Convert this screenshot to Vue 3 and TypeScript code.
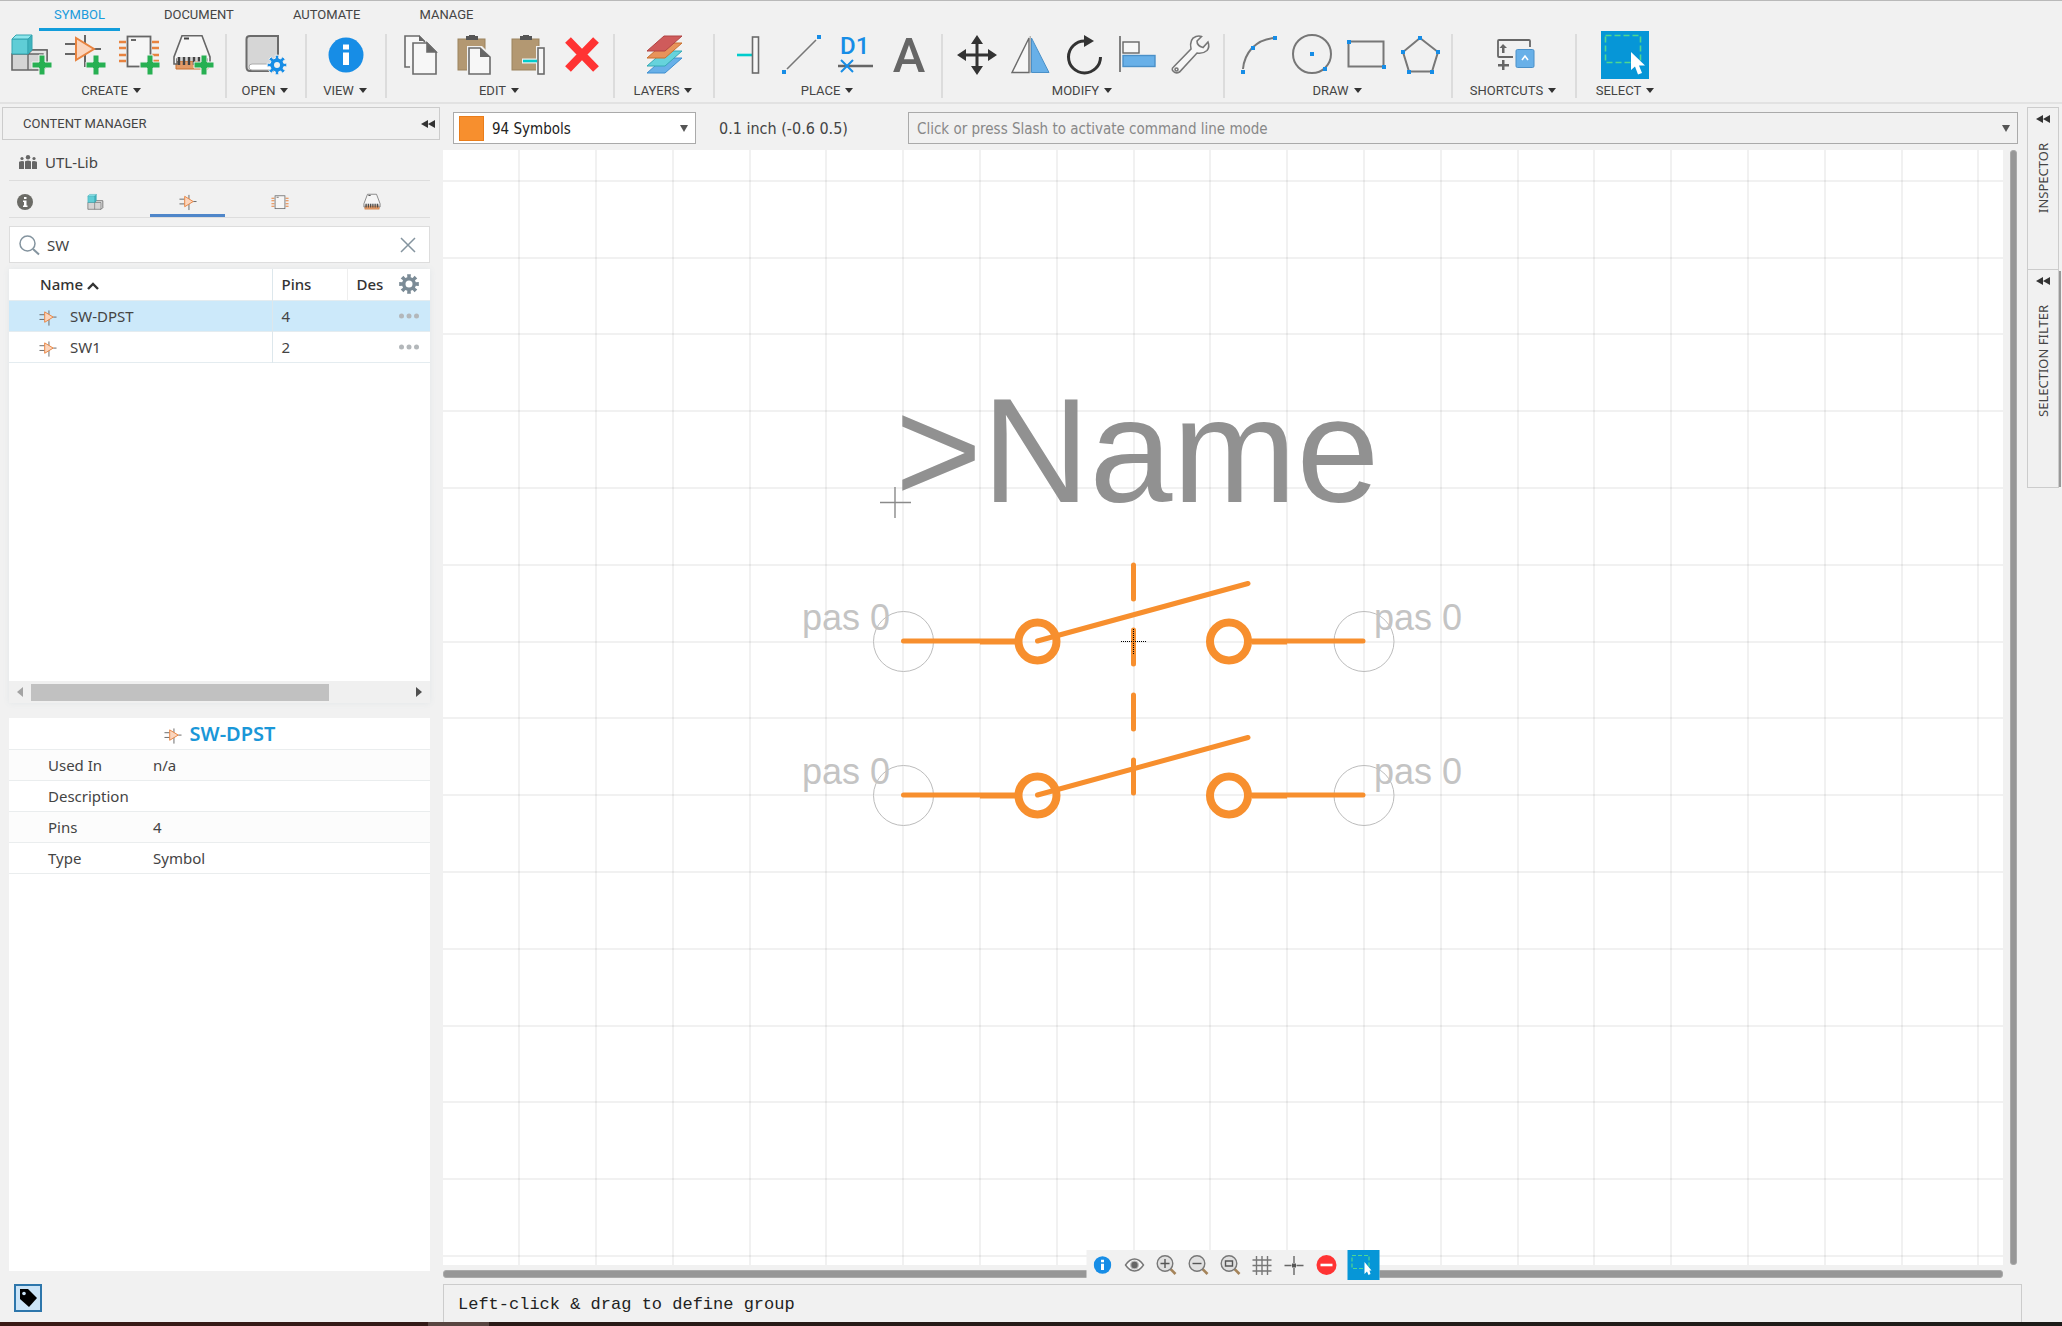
<script setup lang="ts">
import { ref } from 'vue'

const GRID = 76.8
const ORIGIN_X = 690.6
const ORIGIN_Y = 491.5

// Grid lines are placed around the symbol origin and extend past the visible sheet.
const columns = Array.from({ length: 50 }, (_, i) => Math.round(ORIGIN_X + (i - 9) * GRID))
const rows = Array.from({ length: 30 }, (_, i) => Math.round(ORIGIN_Y + (i - 6) * GRID))

function gear(cx: number, cy: number, outer: number, inner: number): string {
  const pts: string[] = []
  for (let i = 0; i < 8; i++) {
    const a = (i * Math.PI) / 4
    const steps: [number, number][] = [[-0.24, inner], [-0.19, outer], [0.19, outer], [0.24, inner]]
    for (const [d, r] of steps) {
      pts.push(`${(cx + r * Math.sin(a + d)).toFixed(2)} ${(cy - r * Math.cos(a + d)).toFixed(2)}`)
    }
  }
  return `M${pts.join('L')}Z`
}
const openGear = gear(32, 30, 10, 7)
const listGear = gear(10, 10, 10, 7)

const menus = ['SYMBOL', 'DOCUMENT', 'AUTOMATE', 'MANAGE']
const activeMenu = ref('SYMBOL')
const search = ref('SW')
const layer = ref('94 Symbols')

const symbols = [
  { name: 'SW-DPST', pins: 4 },
  { name: 'SW1', pins: 2 },
]
const selected = ref('SW-DPST')

const details = [
  { label: 'Used In', value: 'n/a' },
  { label: 'Description', value: '' },
  { label: 'Pins', value: '4' },
  { label: 'Type', value: 'Symbol' },
]

const layerSheets = [
  { y: 22, fill: '#68b0e8', edge: '#3f8fd0' },
  { y: 15, fill: '#66d3dc', edge: '#35aab5' },
  { y: 7, fill: '#e8935a', edge: '#c9712f' },
  { y: 0, fill: '#cf5b5b', edge: '#b04444' },
]
const poles = [0, 154]
</script>

<template>
  <div class="app">
    <svg class="defs" aria-hidden="true">
      <symbol id="opamp" viewBox="0 0 40 40" overflow="visible">
        <path d="M1 9H12M1 19H12M21 0V32M30 14H37" stroke="#666" stroke-width="2" fill="none" />
        <path d="M12 3V25L30 14Z" fill="#fbd5bd" stroke="#e8833f" stroke-width="2" />
      </symbol>
      <symbol id="cubes" viewBox="0 0 40 40" overflow="visible">
        <path d="M18 19L22 15H37V31L33 35H2V19Z" fill="#d4d4d4" stroke="#666" stroke-width="1.6" />
        <path d="M18 19V35M22 15H37V31L33 35V19H18Z" fill="#e4e4e4" stroke="#666" stroke-width="1.4" />
        <path d="M2 4H18V19H2Z" fill="#5fcdd6" stroke="#35a5b0" />
        <path d="M2 4L6 0H22L18 4Z" fill="#8ee6ec" stroke="#35a5b0" />
        <path d="M18 4L22 0V15L18 19Z" fill="#3fb3bd" stroke="#35a5b0" />
      </symbol>
      <symbol id="chip" viewBox="0 0 40 40" overflow="visible">
        <path d="M1 7H8M1 13H8M1 20H8M1 26H8M34 7H41M34 13H41M34 20H41M34 26H41" stroke="#e8833f" stroke-width="2.4" />
        <rect x="9.5" y="1.5" width="23" height="30" fill="#f6f6f6" stroke="#666" stroke-width="1.8" />
        <path d="M13 5H18" stroke="#444" stroke-width="1.6" />
      </symbol>
      <symbol id="package" viewBox="0 0 40 40" overflow="visible">
        <path d="M4 26H36V34H4Z" fill="#e39a66" stroke="#c9712f" />
        <path d="M10 .8H30L38 22V29H35V24H5V29H2V22Z" fill="#f6f6f6" stroke="#666" stroke-width="1.6" />
        <path d="M5 22H35V26H5Z" fill="#d2d2d2" />
        <path d="M7 22V30M12 22V30M17 22V30M22 22V30M27 22V30M32 22V30" stroke="#444" stroke-width="2.4" />
        <path d="M12 3.5H17" stroke="#444" stroke-width="2" />
      </symbol>
      <symbol id="plus" viewBox="0 0 40 40" overflow="visible">
        <path d="M29 20H35V27H42V33H35V40H29V33H22V27H29Z" fill="#27b052" stroke="#f1f1f1" stroke-width="1" />
      </symbol>
      <symbol id="info" viewBox="0 0 36 36">
        <circle cx="18" cy="18" r="17.5" fill="#178de6" />
        <path d="M15 7.5H21V12.5H15ZM15 15.5H21V28H15Z" fill="#fff" />
      </symbol>
      <symbol id="marquee" viewBox="0 0 48 48">
        <rect x="4.5" y="4.5" width="35" height="27" fill="none" stroke="#4fd890" stroke-width="1.6" stroke-dasharray="6 3" />
        <path d="M30 21V39L34 35.5L37 43.5L41 42L38 34.5H44Z" fill="#fff" />
      </symbol>
    </svg>

    <header class="top">
      <nav class="menus">
        <button v-for="m in menus" :key="m" class="menu" :class="{ active: m === activeMenu }" @click="activeMenu = m">{{ m }}</button>
      </nav>
      <div class="toolbar">
        <section class="group first">
          <div class="icons">
            <button class="tool" aria-label="New component"><svg><use href="#cubes" /><use href="#plus" /></svg></button>
            <button class="tool" aria-label="New symbol"><svg><use href="#opamp" /><use href="#plus" /></svg></button>
            <button class="tool" aria-label="New footprint"><svg><use href="#chip" /><use href="#plus" /></svg></button>
            <button class="tool" aria-label="New package"><svg><use href="#package" /><use href="#plus" /></svg></button>
          </div>
          <button class="caption">CREATE</button>
        </section>
        <section class="group single">
          <div class="icons">
            <button class="tool" aria-label="Open library">
              <svg>
                <path d="M5 1H33V36H5Q1.5 36 1.5 32V4Q1.5 1 5 1Z" fill="#d6d6d6" stroke="#6b6b6b" stroke-width="2" />
                <path d="M32 29H7Q4 29 4 32T7 35H32Z" fill="#fff" stroke="#aaa" />
                <path :d="openGear" fill="#178de6" stroke="#f1f1f1" stroke-width="1" /><circle cx="32" cy="30" r="3" fill="#f1f1f1" />
              </svg>
            </button>
          </div>
          <button class="caption">OPEN</button>
        </section>
        <section class="group single">
          <div class="icons">
            <button class="tool" aria-label="Information"><svg><use href="#info" x="3" y="2" width="36" height="36" /></svg></button>
          </div>
          <button class="caption">VIEW</button>
        </section>
        <section class="group">
          <div class="icons">
            <button class="tool" aria-label="Copy">
              <svg fill="#f7f7f7" stroke="#6b6b6b" stroke-width="1.6">
                <path d="M12 32H7V1H21L27 7" /><path d="M21 0V6H27Z" fill="#666" stroke="none" />
                <path d="M15 8H29L38 17V39H15Z" /><path d="M29 8V17H38Z" fill="#666" />
              </svg>
            </button>
            <button class="tool" aria-label="Paste">
              <svg>
                <rect x="6" y="4" width="27" height="31" fill="#b39872" stroke="#9b835f" />
                <path d="M14 1H17V0H23V1H26V5H14Z" fill="#555" />
                <path d="M15 11H30L40 21V41H15Z" fill="#f1f1f1" />
                <path d="M17 13H28L38 22V39H17Z" fill="#f7f7f7" stroke="#6b6b6b" stroke-width="1.6" /><path d="M28 13V22H38Z" fill="#666" />
              </svg>
            </button>
            <button class="tool" aria-label="Paste pin">
              <svg>
                <rect x="6" y="4" width="27" height="31" fill="#b39872" stroke="#9b835f" />
                <path d="M14 1H17V0H23V1H26V5H14Z" fill="#555" />
                <path d="M30 11H40V41H30Z" fill="#f1f1f1" /><path d="M16 23.500H31V28.500H16Z" fill="#f1f1f1" />
                <path d="M17 26H31" stroke="#0cc" stroke-width="2.6" /><rect x="32" y="13" width="6" height="26" fill="#f7f7f7" stroke="#6b6b6b" stroke-width="1.6" />
              </svg>
            </button>
            <button class="tool" aria-label="Delete"><svg><path d="M8 5L36 34M36 5L8 34" stroke="#f33" stroke-width="8" /></svg></button>
          </div>
          <button class="caption">EDIT</button>
        </section>
        <section class="group layers">
          <div class="icons">
            <button class="tool" aria-label="Layers">
              <svg><path v-for="s in layerSheets" :key="s.y" d="M21 1H39L22 16H4Z" :transform="`translate(0 ${s.y})`" :fill="s.fill" :stroke="s.edge" /></svg>
            </button>
          </div>
          <button class="caption">LAYERS</button>
        </section>
        <section class="group">
          <div class="icons">
            <button class="tool" aria-label="Pin"><svg><path d="M11 20H26" stroke="#0cc" stroke-width="2.6" /><rect x="26.5" y="2" width="6" height="36" fill="#f7f7f7" stroke="#6b6b6b" stroke-width="1.6" /></svg></button>
            <button class="tool" aria-label="Line"><svg><path d="M7 34L36 5" stroke="#777" stroke-width="1.6" /><path d="M2 35h4v4h-4zM37 0h4v4h-4z" fill="#178de6" /></svg></button>
            <button class="tool" aria-label="Name"><svg><text x="6" y="19" class="d1">D1</text><path d="M4 31H39" stroke="#666" stroke-width="2.6" /><path d="M7 25L19 37M19 25L7 37" stroke="#178de6" stroke-width="2" /></svg></button>
            <button class="tool" aria-label="Text"><svg><text x="21" y="37" text-anchor="middle" class="big-a">A</text></svg></button>
          </div>
          <button class="caption">PLACE</button>
        </section>
        <section class="group">
          <div class="icons">
            <button class="tool" aria-label="Move">
              <svg><path d="M10 20H36M23 7V33" stroke="#333" stroke-width="3" /><path d="M23 0L29 9H17ZM23 40L29 31H17ZM3 20L12 14V26ZM43 20L34 14V26Z" fill="#333" /></svg>
            </button>
            <button class="tool" aria-label="Mirror">
              <svg><path d="M4 37.5L21 3V37.5Z" fill="#f7f7f7" stroke="#6b6b6b" stroke-width="1.4" /><path d="M22.2 1V38" stroke="#999" /><path d="M23.5 3L41 37.5H23.5Z" fill="#68b0e8" stroke="#4a90c8" /></svg>
            </button>
            <button class="tool" aria-label="Rotate"><svg><path d="M38.5 22A16 16 0 1 1 22.5 6" fill="none" stroke="#333" stroke-width="3" /><path d="M22 0V12L32 6Z" fill="#333" /></svg></button>
            <button class="tool" aria-label="Align">
              <svg><path d="M4 1V37" stroke="#666" stroke-width="1.6" /><rect x="7" y="7" width="16" height="11" fill="#f7f7f7" stroke="#666" stroke-width="1.4" /><rect x="7" y="20.5" width="32" height="11" fill="#68b0e8" stroke="#4a90c8" stroke-width="1.4" /></svg>
            </button>
            <button class="tool" aria-label="Change">
              <svg fill="#f7f7f7" stroke="#777" stroke-width="1.6">
                <path d="M3.5 32L21 14Q19 4 26 1.5Q29 .5 31.5 1.5L27 6Q27 11 33 12.5L38 7Q40 12 37 15.5Q33 19 27 18L9.5 37Q6 39 3.5 36.5T3.5 32Z" />
                <circle cx="6.5" cy="34.5" r="1.5" />
              </svg>
            </button>
          </div>
          <button class="caption">MODIFY</button>
        </section>
        <section class="group">
          <div class="icons">
            <button class="tool" aria-label="Arc"><svg><path d="M7 34Q8 22 16 13Q25 4 38 3" class="thin" /><path d="M5 35h4v4h-4zM15 11h4v4h-4zM37 1h4v4h-4z" class="dots" /></svg></button>
            <button class="tool" aria-label="Circle"><svg><circle cx="22" cy="19" r="19" class="thin" /><path d="M20 17h4v4h-4zM33 32h4v4h-4z" class="dots" /></svg></button>
            <button class="tool" aria-label="Rectangle"><svg><rect x="4.5" y="6.5" width="35" height="25" class="thin" /><path d="M3 5h4v4h-4zM38 30h4v4h-4z" class="dots" /></svg></button>
            <button class="tool" aria-label="Polygon"><svg><path d="M22 3L40 17L34 36.5H11L5 17Z" class="thin" /><path d="M20 1h4v4h-4zM38 15h4v4h-4zM32 35h4v4h-4zM9 35h4v4h-4zM3 15h4v4h-4z" class="dots" /></svg></button>
          </div>
          <button class="caption">DRAW</button>
        </section>
        <section class="group shortcuts">
          <div class="icons">
            <button class="tool" aria-label="Shortcuts">
              <svg>
                <path d="M20 22H6Q5 22 5 21V6Q5 5 6 5H36Q37 5 37 6V12" fill="none" stroke="#666" stroke-width="1.8" />
                <path d="M10 9L14 13H11.5V18H9V13H6.5ZM9 25H11.5V29H16V31.5H11.5V35H9V31.5H5V29H9Z" fill="#666" />
                <rect x="23" y="14.5" width="18" height="18" rx="1.5" fill="#68b0e8" stroke="#4a90c8" /><path d="M29 25L32 21L35 25" fill="none" stroke="#fff" stroke-width="1.6" />
              </svg>
            </button>
          </div>
          <button class="caption">SHORTCUTS</button>
        </section>
        <section class="group select-group">
          <div class="icons"><button class="tool chosen" aria-label="Group select"><svg><use href="#marquee" /></svg></button></div>
          <button class="caption">SELECT</button>
        </section>
      </div>
    </header>

    <main class="main">
      <aside class="sidebar">
        <div class="panel-head">
          <span>CONTENT MANAGER</span>
          <button class="collapse" aria-label="Collapse"><svg width="14" height="8" viewBox="0 0 14 8"><path d="M7 0V8L0 4ZM14 0V8L7 4Z" fill="#333" /></svg></button>
        </div>
        <div class="content">
          <div class="library">
            <svg width="18" height="14" viewBox="0 0 18 14" fill="#666"><circle cx="9" cy="2.2" r="2.2" /><circle cx="3" cy="3.5" r="1.6" /><circle cx="15" cy="3.5" r="1.6" /><path d="M6 14V7Q6 5.5 9 5.5T12 7V14ZM0 14V7.5Q0 6 3 6Q4.5 6 5 6.5V14ZM18 14V7.5Q18 6 15 6Q13.5 6 13 6.5V14Z" /></svg>
            <span>UTL-Lib</span>
          </div>
          <nav class="tabs">
            <button class="tab info-tab" aria-label="Info"><svg width="16" height="16" viewBox="0 0 16 16"><circle cx="8" cy="8" r="8" fill="#6b6b66" /><path d="M7 3H9.5V5H7ZM6 6.5H9.5V11.5H10.5V13H6V11.5H7V8H6Z" fill="#fff" /></svg></button>
            <button class="tab" aria-label="Components"><svg width="17" height="17" viewBox="0 0 40 38"><use href="#cubes" width="40" height="40" /></svg></button>
            <button class="tab on" aria-label="Symbols"><svg width="18" height="18" viewBox="0 0 38 38"><use href="#opamp" width="40" height="40" y="4" /></svg></button>
            <button class="tab" aria-label="Footprints"><svg width="18" height="18" viewBox="0 0 42 38"><use href="#chip" width="40" height="40" y="3" /></svg></button>
            <button class="tab" aria-label="Packages"><svg width="18" height="18" viewBox="0 0 40 38"><use href="#package" width="40" height="40" y="1" /></svg></button>
          </nav>
          <label class="search">
            <svg width="20" height="20" viewBox="0 0 20 20" fill="none" stroke="#84949f" stroke-width="1.5"><circle cx="8.5" cy="8.5" r="7.5" /><path d="M14 14L20 19.5" stroke-width="2" /></svg>
            <input v-model="search" type="text" aria-label="Search symbols" />
            <button class="clear" aria-label="Clear" @click="search = ''"><svg width="16" height="16" viewBox="0 0 16 16"><path d="M1 1L15 15M15 1L1 15" stroke="#84949f" stroke-width="1.5" /></svg></button>
          </label>

          <div class="list">
            <table class="symbols">
              <thead>
                <tr>
                  <th class="c-name">Name <svg width="12" height="8" viewBox="0 0 12 8"><path d="M1 7L6 2L11 7" fill="none" stroke="#333" stroke-width="2.4" /></svg></th>
                  <th class="c-pins">Pins</th>
                  <th class="c-des">Des</th>
                  <th class="c-act"><button aria-label="Columns"><svg width="20" height="20" viewBox="0 0 20 20"><path :d="listGear" fill="#7b8b96" /><circle cx="10" cy="10" r="3.5" fill="#fff" /></svg></button></th>
                </tr>
              </thead>
              <tbody>
                <tr v-for="s in symbols" :key="s.name" :class="{ picked: s.name === selected }" @click="selected = s.name">
                  <td class="c-name"><span class="cell"><svg width="18" height="17" viewBox="0 0 38 34"><use href="#opamp" width="40" height="40" /></svg>{{ s.name }}</span></td>
                  <td class="c-pins">{{ s.pins }}</td>
                  <td class="c-des"></td>
                  <td class="c-act"><button aria-label="More"><svg width="20" height="6" viewBox="0 0 20 6" fill="#b3b7ba"><circle cx="2.5" cy="3" r="2.5" /><circle cx="10" cy="3" r="2.5" /><circle cx="17.5" cy="3" r="2.5" /></svg></button></td>
                </tr>
              </tbody>
            </table>
            <div class="hscroll">
              <svg width="6" height="10" viewBox="0 0 6 10"><path d="M6 0V10L0 5Z" fill="#a3a3a3" /></svg>
              <div class="track"><div class="thumb"></div></div>
              <svg width="6" height="10" viewBox="0 0 6 10"><path d="M0 0V10L6 5Z" fill="#505050" /></svg>
            </div>
          </div>

          <section class="details">
            <h2><svg width="18" height="17" viewBox="0 0 38 34"><use href="#opamp" width="40" height="40" /></svg><span>SW-DPST</span></h2>
            <table>
              <tbody>
                <tr v-for="d in details" :key="d.label"><th>{{ d.label }}</th><td>{{ d.value }}</td></tr>
              </tbody>
            </table>
          </section>
        </div>
        <div class="side-foot">
          <button class="tag" aria-label="Tags"><svg width="18" height="18" viewBox="0 0 18 18"><path d="M1 0H9L18 9L10 18L1 10Z" fill="#000" /><circle cx="5" cy="4.5" r="1.8" fill="#cbe4f7" /></svg></button>
        </div>
      </aside>

      <section class="editor">
        <div class="options">
          <div class="layer-box">
            <span class="swatch"></span>
            <select v-model="layer" aria-label="Layer"><option>94 Symbols</option></select>
            <span class="arrow"></span>
          </div>
          <span class="coords">0.1 inch (-0.6 0.5)</span>
          <div class="command">
            <input type="text" aria-label="Command line" placeholder="Click or press Slash to activate command line mode" />
            <span class="arrow"></span>
          </div>
        </div>

        <div class="work">
          <svg class="sheet">
            <g stroke="#000" stroke-opacity=".055" stroke-width="2">
              <line v-for="x in columns" :key="'c' + x" :x1="x" :x2="x" y1="0" y2="100%" />
              <line v-for="y in rows" :key="'r' + y" x1="0" x2="100%" :y1="y" :y2="y" />
            </g>
            <text x="452" y="352" class="name-text">&gt;Name</text>
            <path d="M437 352.5H468M452 337V368" stroke="#8a8a8a" stroke-width="1.4" />
            <g v-for="p in poles" :key="p" :transform="`translate(0 ${p})`">
              <g fill="none" stroke="#bcbcbc"><circle cx="460.5" cy="491.5" r="30" /><circle cx="921" cy="491.5" r="30" /></g>
              <text x="359" y="480" class="pin-text">pas 0</text>
              <text x="931" y="480" class="pin-text">pas 0</text>
              <g fill="none" stroke="#f78f2e" stroke-width="5" stroke-linecap="round">
                <path d="M460.5 491H573M809 491H920M594.5 491L805 433.5" />
                <path d="M537 492H573M809 492H844" stroke-linecap="butt" />
                <g stroke-width="8"><circle cx="594.5" cy="491.5" r="19" /><circle cx="786" cy="491.5" r="19" /></g>
              </g>
            </g>
            <path d="M690.5 415V449M690.5 480V514M690.5 545V579M690.5 610V643" stroke="#f78f2e" stroke-width="5" stroke-linecap="round" />
            <path d="M678 491.5H703M690.5 479V504" stroke="#000" stroke-dasharray="1 1" />
          </svg>
          <div class="v-bar"><div></div></div>
          <div class="h-bar"><div></div></div>
          <div class="view-tools">
            <button aria-label="Info"><svg width="18" height="18"><use href="#info" width="18" height="18" /></svg></button>
            <button aria-label="Visibility"><svg width="20" height="14" viewBox="0 0 20 14"><path d="M1 7Q5 1 10 1T19 7Q15 13 10 13T1 7Z" fill="#f7f7f7" stroke="#777" stroke-width="1.4" /><circle cx="10" cy="7" r="4.5" fill="#bbb" /><circle cx="10" cy="7" r="3.2" fill="#666" /></svg></button>
            <button v-for="(glyph, i) in ['M4 8.5H13M8.5 4V13', 'M4 8.5H13', 'M5 6H12V11H5Z']" :key="glyph" :aria-label="['Zoom in', 'Zoom out', 'Zoom to fit'][i]">
              <svg width="20" height="20" viewBox="0 0 20 20"><path d="M14 14L19 19" stroke="#a5845a" stroke-width="2.6" /><circle cx="8.5" cy="8.5" r="7.8" fill="#e0e0e0" stroke="#777" stroke-width="1.4" /><path :d="glyph" fill="none" stroke="#555" stroke-width="1.4" /></svg>
            </button>
            <button aria-label="Grid"><svg width="19" height="19" viewBox="0 0 19 19"><path d="M0 4H19M0 9.5H19M0 15H19M4 0V19M9.5 0V19M15 0V19" stroke="#777" stroke-width="1.4" /></svg></button>
            <button aria-label="Cross"><svg width="19" height="19" viewBox="0 0 19 19"><path d="M0 9.5H7M12 9.5H19M9.5 0V7M9.5 12V19" stroke="#666" stroke-width="1.4" /><rect x="7.5" y="7.5" width="4" height="4" fill="#555" /></svg></button>
            <button aria-label="Stop"><svg width="20" height="20" viewBox="0 0 20 20"><circle cx="10" cy="10" r="10" fill="#f33" /><path d="M4 10H16" stroke="#fff" stroke-width="2.6" /></svg></button>
            <button class="chosen" aria-label="Group select"><svg width="32" height="30" viewBox="0 0 32 30"><rect x="4.5" y="5.5" width="17" height="13" fill="none" stroke="#4fd890" stroke-width="1.2" stroke-dasharray="4 2" /><path d="M17 12V24L19.5 21.5L21 25L23 24L22 20.5H24Z" fill="#fff" /></svg></button>
          </div>
        </div>

        <footer class="status">Left-click &amp; drag to define group</footer>
      </section>

      <aside class="dock">
        <button class="dock-tab"><svg width="14" height="8" viewBox="0 0 14 8"><path d="M7 0V8L0 4ZM14 0V8L7 4Z" fill="#333" /></svg><span>INSPECTOR</span></button>
        <button class="dock-tab tall"><svg width="14" height="8" viewBox="0 0 14 8"><path d="M7 0V8L0 4ZM14 0V8L7 4Z" fill="#333" /></svg><span>SELECTION FILTER</span></button>
      </aside>
    </main>
    <div class="edge"></div>
  </div>
</template>

<style>
body { margin: 0; background: #f1f1f1; }
</style>

<style scoped>
* { box-sizing: border-box; }
button { border: 0; padding: 0; margin: 0; background: none; font: inherit; color: inherit; cursor: pointer; }
svg { display: block; overflow: visible; }
.defs { position: absolute; width: 0; height: 0; }
.app { display: flex; flex-direction: column; min-height: 100vh; background: #f1f1f1; color: #444; font: 15px/20px "Noto Sans", sans-serif; }

.top { height: 104px; border-top: 1px solid #b9b9b9; border-bottom: 2px solid #e2e2e2; font: 13px/24px Roboto, sans-serif; display: flex; flex-direction: column; }
.menus { display: flex; height: 30px; padding-left: 39px; gap: 29px; }
.menu { padding: 0 15px; color: #444; line-height: 28px; border-bottom: 3px solid transparent; }
.menu.active { color: #1a9bdc; border-color: #129ddb; }
.toolbar { display: flex; flex: 1; }
.group { position: relative; display: flex; flex-direction: column; align-items: center; padding: 0 15px 0 11px; }
.group::after { content: ""; position: absolute; right: 0; top: 3px; width: 2px; height: 64px; background: #dcdcdc; }
.group.first { padding-left: 10px; }
.group.single { width: 80px; }
.group.layers { width: 100px; }
.group.shortcuts { width: 124px; }
.select-group { width: 100px; }
.select-group::after { display: none; }
.icons { display: flex; gap: 14px; }
.tool { width: 40px; height: 48px; padding: 4px 0; }
.tool svg { width: 40px; height: 40px; }
.tool.chosen { width: 48px; padding: 0; background: #0696d7; }
.tool.chosen svg { width: 48px; height: 48px; }
.caption { display: flex; align-items: center; gap: 5px; height: 23px; line-height: 24px; white-space: nowrap; }
.caption::after, .arrow { content: ""; border: solid transparent; border-width: 5px 4px 0; border-top-color: #333; }
.d1 { font: 500 24px Roboto, sans-serif; fill: #178de6; }
.big-a { font: 500 49px Roboto, sans-serif; fill: #666; }
.thin { fill: none; stroke: #777; stroke-width: 2px; }
.dots { fill: #178de6; }

.main { display: flex; flex: 1; }
.sidebar { width: 443px; display: flex; flex-direction: column; }
.panel-head { margin: 3px 3px 0 2px; height: 33px; border: 1px solid #ccc; display: flex; align-items: center; justify-content: space-between; padding: 0 4px 0 20px; font: 13px/20px Roboto, sans-serif; }
.content { margin: 0 13px 0 9px; flex: 1; display: flex; flex-direction: column; }
.library { height: 41px; padding: 4px 0 0 10px; border-bottom: 1px solid #ddd; display: flex; align-items: center; gap: 8px; }
.tabs { height: 37px; display: flex; gap: 17px; border-bottom: 1px solid #ddd; }
.tab { width: 75px; display: flex; align-items: center; justify-content: center; padding-top: 9px; border-bottom: 3px solid transparent; }
.info-tab { width: 32px; }
.tab.on { border-color: #4f86c9; }
.search { margin-top: 8px; height: 37px; display: flex; align-items: center; gap: 8px; padding: 0 13px 0 9px; background: #fff; border: 1px solid #ddd; }
.search input { flex: 1; min-width: 0; border: 0; outline: 0; padding: 0; font: inherit; color: #444; background: none; }
.list { margin-top: 6px; height: 434px; display: flex; flex-direction: column; justify-content: space-between; background: #fff; box-shadow: 0 0 6px #e2e6e8; }
table { border-collapse: collapse; width: 100%; }
.symbols { table-layout: fixed; }
th, td { height: 31px; padding: 0; text-align: left; font-weight: 400; }
.symbols th { font-weight: 500; color: #333; white-space: nowrap; }
.symbols tr { border-bottom: 1px solid #e4ecf0; }
.symbols .picked { background: #cce9fa; }
.symbols .c-name { width: 263px; padding-left: 31px; border-right: 1px solid #dde7ec; }
.c-name svg { display: inline-block; }
.cell { display: flex; align-items: center; gap: 13px; }
.cell svg, .details h2 svg { margin-top: 6px; }
.symbols td.c-name { padding-left: 30px; }
.c-pins { width: 75px; padding-left: 9px; }
.symbols th.c-des { width: 37px; padding-left: 9px; border-left: 1px solid #eee; }
.c-act { padding-left: 4px; }
.c-act button { display: flex; margin: 0 auto; }
.hscroll { height: 22px; background: #f0f0f0; display: flex; align-items: center; padding: 0 8px; gap: 8px; }
.track { flex: 1; height: 17px; }
.thumb { width: 79%; height: 100%; background: #c1c1c1; }
.details { margin-top: 15px; flex: 1; background: #fff; }
.details h2 { margin: 0; height: 31px; display: flex; align-items: center; justify-content: center; gap: 8px; font-size: 20px; font-weight: 600; color: #1a97d8; }
.details tr { border-top: 1px solid #eaedee; }
.details tr:last-child { border-bottom: 1px solid #eaedee; }
.details tr:nth-child(odd) { background: #fcfcfc; }
.details th { width: 144px; padding-left: 39px; }
.side-foot { height: 51px; padding: 13px 14px; }
.tag { width: 28px; height: 28px; display: flex; align-items: center; justify-content: center; border: 2px solid #2d76ab; background: #cbe4f7; }

.editor { flex: 1; min-width: 0; display: flex; flex-direction: column; }
.options { height: 46px; padding: 8px 4px 6px 10px; display: flex; font: 15px/20px "DejaVu Sans Condensed", "Noto Sans", sans-serif; }
.layer-box, .command { position: relative; display: flex; align-items: center; border: 1px solid #aaa; height: 32px; }
.layer-box { width: 243px; background: #fff; padding-left: 5px; }
.swatch { width: 25px; height: 25px; background: #f78f2e; border: 1px solid #ea7d1a; }
.layer-box select { appearance: none; flex: 1; border: 0; outline: 0; background: none; padding: 2px 8px 0; font: inherit; color: #222; }
.arrow { margin: 0 7px; border-width: 7px 4px 0; border-top-color: #555; }
.coords { width: 212px; padding-left: 23px; font-size: 16px; line-height: 34px; color: #444; }
.command { flex: 1; }
.command input { flex: 1; border: 0; outline: 0; background: none; padding: 2px 8px 0; font: inherit; }
.command input::placeholder { color: #888; opacity: 1; }
.work { position: relative; flex: 1; display: grid; grid-template: 1fr 19px / 1fr 19px; }
.sheet { width: 100%; height: 100%; overflow: hidden; background: #fff; }
.name-text { font: 149px "Liberation Sans", sans-serif; fill: #919191; }
.pin-text { font: 36px "Liberation Sans", sans-serif; fill: #c4c4c4; }
.v-bar { padding: 0 5px 0 7px; }
.v-bar div, .h-bar div { height: 100%; border-radius: 3px; background: #979797; border: 1px solid #aaa; }
.h-bar { padding: 5px 0 6px; }
.view-tools { position: absolute; left: 50%; bottom: 4px; transform: translateX(-50%); display: flex; background: #f1f1f1; }
.view-tools button { width: 32px; height: 30px; display: flex; align-items: center; justify-content: center; }
.view-tools .chosen { margin-left: 5px; background: #0696d7; }
.status { height: 38px; padding-left: 14px; border: 1px solid #ccc; border-bottom: 0; font: 17px/39px "Liberation Mono", monospace; color: #222; }

.dock { width: 40px; padding: 3px 3px 0 5px; display: flex; flex-direction: column; }
.dock-tab { height: 163px; border: 1px solid #ccc; display: flex; flex-direction: column; align-items: center; padding-top: 7px; gap: 20px; font: 13px/20px "Noto Sans", sans-serif; }
.dock-tab.tall { height: 218px; border-top: 0; box-shadow: 3px 0 0 -1px #999; }
.dock-tab span { writing-mode: vertical-rl; transform: rotate(180deg); }
.edge { height: 4px; background: linear-gradient(90deg, #3a1a16, #331a17 428px, #584541 428px, #584541 489px, #2a1a17 489px, #1d1c19); }
</style>
